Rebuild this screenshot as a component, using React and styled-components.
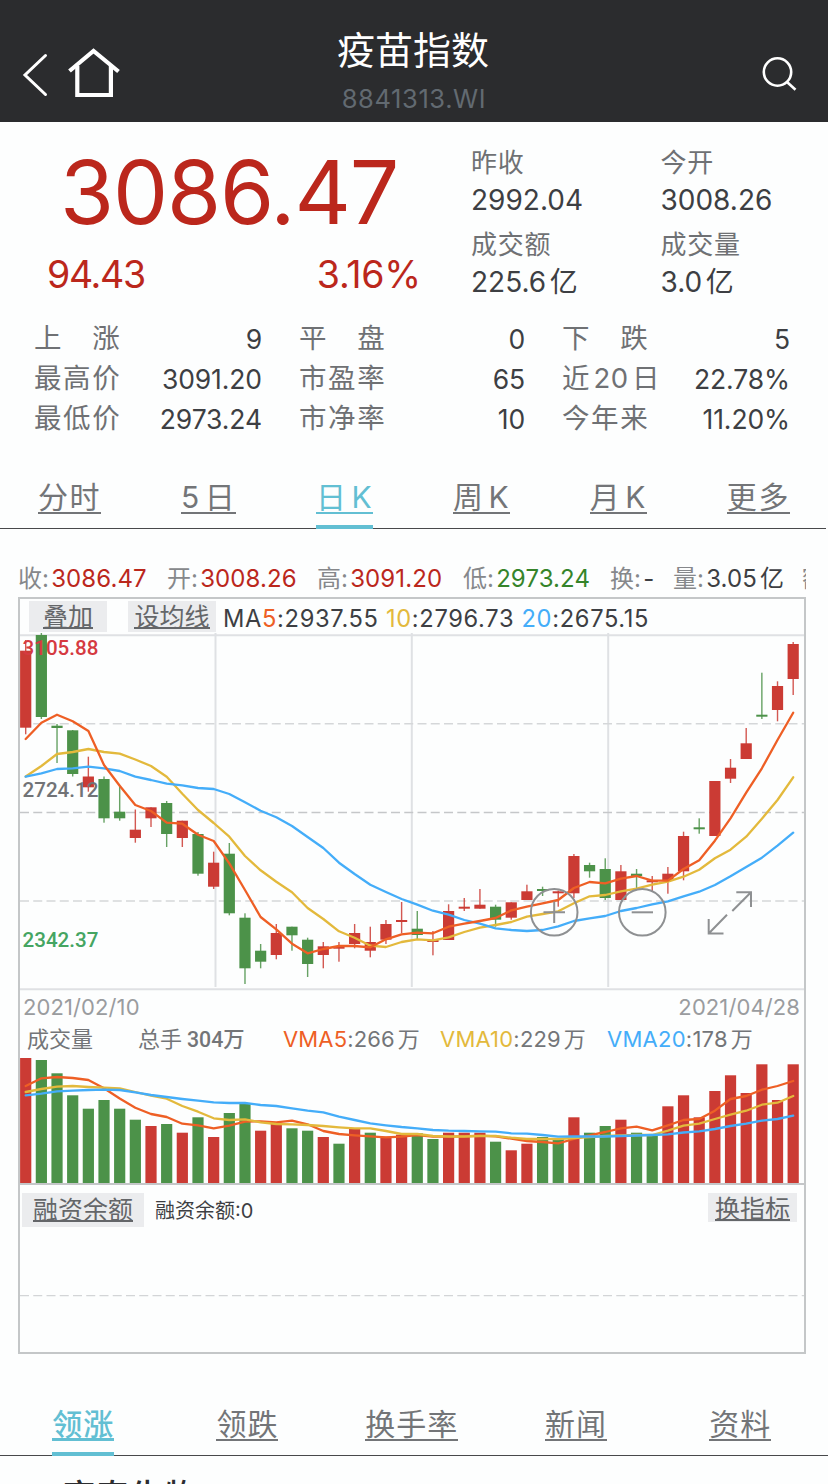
import React from 'react';
import styled, { createGlobalStyle } from 'styled-components';

const RED = '#bb271c';
const UP = '#cb3b34';
const DOWN = '#4c9249';
const ORANGE = '#ee5f25';
const YELLOW = '#e3b93c';
const BLUE = '#44adf9';
const TEAL = '#62bfd3';

const GlobalStyle = createGlobalStyle`
  * {
    box-sizing: border-box;
  }

  body {
    margin: 0;
    background: #fdfefe;
    color: #3d3f43;
    font-family: Inter, "Noto Sans CJK SC", sans-serif;
  }
`;

const Page = styled.div`
  width: 828px;
  height: 1484px;
  overflow: hidden;
  white-space: nowrap;
`;

const Gap = styled.i`
  display: inline-block;
  width: 0.13em;
`;

const Header = styled.header`
  display: grid;
  grid-template-columns: 199px 1fr 201px;
  height: 122px;
  padding: 26px 0 0;
  background: #2b2c2e;
`;

const HeaderLeft = styled.div`
  display: flex;
  gap: 19px;
  padding: 21px 0 0 22px;
`;

const HeaderRight = styled.div`
  display: flex;
  justify-content: flex-end;
  padding: 29px 30px 0 0;
`;

const Heading = styled.div`
  text-align: center;
`;

const Title = styled.h1`
  margin: 0;
  color: #fff;
  font-size: 38px;
  font-weight: 400;
  line-height: 48px;
`;

const Code = styled.div`
  padding: 10px 0 0 2px;
  color: #626a71;
  font-size: 25.5px;
  line-height: 30px;
  letter-spacing: 0.6px;
`;

const Summary = styled.section`
  display: flex;
  height: 196px;
`;

const PriceBlock = styled.div`
  width: 471px;
  color: ${RED};
`;

const Price = styled.div`
  padding: 22px 0 0 60px;
  font-size: 87.5px;
  line-height: 97px;
  letter-spacing: -1.1px;
`;

const Change = styled.div`
  display: flex;
  justify-content: space-between;
  padding: 10px 50px 0 47px;
  font-size: 37.5px;
  line-height: 47px;
  letter-spacing: -1.3px;

  span + span {
    letter-spacing: -0.2px;
  }
`;

const Figures = styled.div`
  display: grid;
  grid-template-columns: 189.5px 1fr;
  grid-auto-rows: 82px;
  flex: 1;
  padding-top: 22px;
`;

const FigureLabel = styled.div`
  color: #6f7174;
  font-size: 26px;
  line-height: 38px;
  letter-spacing: 0.8px;
`;

const FigureValue = styled.div`
  font-size: 28px;
  line-height: 37px;
`;

const Stats = styled.section`
  display: grid;
  grid-template-columns: 228px 226px 228px;
  grid-auto-rows: 40px;
  column-gap: 37px;
  padding: 0 38px 0 34px;
  height: 150px;
`;

const Stat = styled.div`
  display: flex;
  justify-content: space-between;
  font-size: 26.5px;
  line-height: 42px;
  letter-spacing: -0.1px;
`;

const StatLabel = styled.span`
  color: #6f7174;
  font-size: 27.5px;
  line-height: 40px;
  letter-spacing: ${props => (props.$tight ? 0.4 : 1.6)}px;
`;

const PeriodTabs = styled.nav`
  display: flex;
  justify-content: space-between;
  width: 826px;
  height: 61px;
  padding: 0 36px 0 38px;
  border-bottom: 1px solid #48494b;
`;

const RankTabs = styled.nav`
  display: grid;
  grid-template-columns: repeat(5, 164.3px);
  justify-items: center;
  height: 61px;
  margin-top: 41px;
  padding-left: 1px;
  border-bottom: 1px solid #48494b;
`;

const Tab = styled.a`
  height: 61px;
  border-bottom: 4px solid ${props => (props.$active ? TEAL : 'transparent')};
  color: ${props => (props.$active ? TEAL : '#737578')};
  font-size: 30px;
  font-weight: ${props => (props.$bold ? 500 : 400)};
  letter-spacing: 1px;

  span {
    display: block;
    height: 46px;
    border-bottom: ${props => (props.$bold ? 3 : 2)}px solid;
    line-height: 58px;
  }

  ${PeriodTabs} & {
    letter-spacing: 1.6px;
  }
`;

const Quote = styled.div`
  display: flex;
  width: 788px;
  height: 68px;
  margin-left: 18px;
  padding-top: 32px;
  overflow: hidden;
  color: #3d3f43;
  font-size: 24px;
  line-height: 36px;
`;

const QuoteItem = styled.div`
  width: ${props => props.$width}px;
  flex: none;
  color: ${props => props.$color || 'inherit'};
  letter-spacing: 0.1px;

  span {
    margin-right: 2px;
    color: #86888b;
  }
`;

const Panel = styled.section`
  width: 788px;
  height: 757px;
  margin-left: 18px;
  border: 2px solid #c4c7c8;

  svg {
    display: block;
  }
`;

const Toolbar = styled.div`
  display: flex;
  height: 34px;
  padding: 2px 0 0 9px;
`;

const Chip = styled.button`
  width: ${props => props.$width}px;
  height: ${props => props.$height || 31}px;
  margin-right: ${props => props.$after || 0}px;
  padding: 0;
  border: 0;
  background: #ebecee;
  color: #646669;
  font-family: inherit;
  font-size: 25px;
  line-height: 32px;

  span {
    display: inline-block;
    height: 28px;
    border-bottom: 2px solid;
  }
`;

const Averages = styled.div`
  padding-left: 7px;
  font-size: 23.7px;
  line-height: 36px;
  letter-spacing: 0.65px;
`;

const Tint = styled.span`
  color: ${props => props.$color};
`;

const Dates = styled.div`
  display: flex;
  justify-content: space-between;
  height: 34px;
  padding: 0 4px 0 3px;
  color: #9a9c9f;
  font-size: 22px;
  line-height: 33px;
  letter-spacing: 0.1px;
`;

const VolumeLegend = styled.div`
  display: flex;
  height: 33px;
  padding-left: 7px;
  color: #737578;
  font-size: 22px;
  line-height: 29px;
`;

const LegendItem = styled.div`
  width: ${props => props.$width}px;
  flex: none;
  letter-spacing: ${props => props.$spacing || 0}px;

  b {
    margin-left: 5px;
    font-family: Roboto, "Noto Sans CJK SC", sans-serif;
    font-size: 21.3px;
    font-weight: 500;
  }
`;

const MarginBar = styled.div`
  display: flex;
  height: 41px;
  padding: 8px 7px 0 2px;
`;

const MarginText = styled.div`
  flex: 1;
  padding-left: 11px;
  font-size: 20px;
  line-height: 36px;
`;

const StockName = styled.div`
  padding: 16px 0 0 61px;
  color: #2c2d30;
  font-size: 34px;
  font-weight: 500;
  line-height: 50px;
  letter-spacing: 0.6px;
`;

// y positions per trading day: [up?, body top, body bottom, high, low]
const CANDLES = [
  [1, 650.7, 727.7, 640, 734.3], [0, 635, 717, 633, 719], [0, 725.7, 728, 724, 763],
  [0, 730.3, 774, 730, 776.5], [1, 776.5, 787.3, 756.7, 791.7], [0, 779, 818.3, 776.5, 822.7],
  [0, 811.7, 818.3, 785, 820.7], [1, 829.7, 838, 809.5, 842.7], [1, 807.3, 818.3, 807.3, 827],
  [0, 803, 834, 801, 847], [1, 820.7, 838, 820.7, 847], [0, 834, 873.7, 832, 875.7],
  [1, 862.7, 886.7, 851.7, 889], [0, 853.7, 913.3, 843, 915.3], [0, 917.7, 968.3, 913.3, 984],
  [0, 950.7, 961.7, 944, 968.3], [1, 933, 955, 924, 959.3], [0, 926.7, 935.3, 926.7, 950.7],
  [0, 939.7, 964, 937.7, 977], [1, 946.3, 955, 942, 968.3], [1, 946.3, 948.7, 942, 961.7],
  [1, 933, 944, 924, 948.3], [1, 942, 950.7, 926.7, 957.3], [1, 924, 939.7, 920, 944],
  [1, 920, 922, 902, 933.3], [0, 928.7, 935, 911, 939.3], [1, 940, 942, 931, 955.3],
  [1, 911, 940, 904.3, 940], [1, 906.7, 908.7, 898, 911], [1, 904.7, 908.7, 889, 908.7],
  [0, 906.7, 919.7, 904.7, 926.7], [1, 902.3, 917.7, 902.3, 919.7], [1, 891.3, 900, 884.7, 900],
  [0, 889, 891, 886.7, 896], [1, 891.3, 893.3, 890.5, 906.7], [1, 856, 893.3, 854, 898],
  [0, 865, 871.3, 862.7, 877.7], [0, 869, 898, 858.3, 900], [1, 871.3, 900, 865, 900],
  [0, 873.7, 876, 869, 889], [1, 880.3, 882.3, 876, 891], [1, 873.7, 880.3, 867, 893.7],
  [1, 836, 871.3, 831.7, 880.3], [0, 827.3, 829.3, 818.3, 833.7], [1, 781, 836, 781, 836],
  [1, 767.7, 778.7, 759, 783], [1, 743.3, 759, 728, 759], [0, 714.7, 716.7, 672.7, 719],
  [1, 686, 710, 681.3, 721.3], [1, 644, 679, 642, 695],
];

const MA5 = [739, 722.7, 714.7, 721.3, 731, 765, 785.7, 805, 811, 822.7, 823.7, 834.7, 841, 863.3, 890, 917, 929.3, 943.7, 953.3, 949, 946, 946, 947.3, 939.3, 934.3, 932.7, 933.3, 926.7, 923.7, 921, 918, 910.3, 906.7, 903.3, 900, 888, 882, 883.3, 878.7, 876, 880.7, 880.7, 869, 860.3, 840.7, 818.3, 792.7, 768.3, 740, 712.7];
const MA10 = [776.5, 766, 754, 752, 749, 752, 753.7, 759.5, 766, 776.7, 793.7, 810, 823, 836.7, 856, 870.3, 881.7, 892.3, 908, 919, 931.3, 937.7, 945.7, 947, 942, 939.3, 940.3, 937.3, 932, 927.7, 925, 922, 916.7, 914, 911.3, 903.3, 896.3, 895, 891.3, 888.7, 884.7, 881.7, 876.7, 869.7, 858.3, 849.7, 836.7, 818.7, 800, 777.3];
const MA20 = [776.7, 773.3, 769, 768.3, 766.7, 768.3, 771, 776.7, 780, 783.7, 785.3, 788, 789, 794, 802.3, 810.7, 817.3, 826, 837, 848, 862.7, 874, 884.7, 892, 899, 904.7, 910.7, 914.7, 920, 923.7, 928.3, 930, 931, 930, 926.3, 921, 918.3, 916, 911, 908, 904.3, 901.3, 896.3, 891.7, 885, 876.3, 867, 857.7, 845.7, 832.7];

const VOLUMES = [1058, 1060, 1073.3, 1095.3, 1108.7, 1100, 1108.7, 1119.7, 1126, 1124, 1132.7, 1117.3, 1137, 1113, 1104, 1130.7, 1124, 1128.3, 1130.7, 1137, 1143.7, 1128.3, 1132.7, 1136.7, 1134.7, 1133.3, 1139, 1132.7, 1132.7, 1132.7, 1141.7, 1150.3, 1143.7, 1137, 1139, 1117.3, 1132.7, 1126, 1119.7, 1132.7, 1135, 1106.3, 1095.3, 1117.3, 1091, 1075.3, 1093, 1064.3, 1100, 1064.3];
const VOLUME_UP = '10000000101010011001010110011101100100100111111111';
const VMA5 = [1086, 1078.3, 1077, 1078, 1080, 1088.3, 1098.5, 1107.7, 1114, 1117, 1123.7, 1125.3, 1128.3, 1125.7, 1121.7, 1121.3, 1122.3, 1120.7, 1124.3, 1131, 1134, 1135.3, 1136.3, 1137.3, 1136.7, 1135, 1136.7, 1136.7, 1136.3, 1135.7, 1136.3, 1138.7, 1141, 1142, 1143.3, 1139, 1135.3, 1132, 1128.3, 1126.7, 1130.3, 1125.3, 1120, 1119, 1110.7, 1099, 1096, 1089.7, 1086, 1081];
const VMA10 = [1092, 1089, 1086.7, 1086, 1087, 1087.7, 1088.3, 1092, 1095.7, 1098.7, 1106, 1111.7, 1118.3, 1120, 1119.3, 1122.3, 1124, 1124.3, 1125, 1126, 1127.3, 1128.3, 1128.3, 1131, 1134, 1134, 1136, 1136.5, 1136.5, 1136, 1136, 1137.7, 1139, 1139, 1139, 1138, 1137, 1136, 1135.3, 1135, 1135, 1130.7, 1125.7, 1123.7, 1119, 1114.7, 1110.7, 1104.7, 1102.7, 1096];
const VMA20 = [1095.3, 1093.7, 1091.3, 1090.7, 1090, 1089.7, 1090, 1092.3, 1095, 1097, 1099, 1100.7, 1102.3, 1103, 1103, 1105, 1106, 1108.3, 1110.7, 1112.3, 1116.7, 1120, 1123.3, 1125.3, 1127, 1128.3, 1130, 1130.7, 1131, 1131.3, 1131.7, 1133.3, 1133.7, 1135, 1136.7, 1136.3, 1136.5, 1136.5, 1136, 1135.5, 1135, 1134.3, 1132.5, 1131.3, 1129, 1126, 1123.7, 1120.7, 1119, 1115.7];

const xAt = (index) => 25.7 + index * 15.663;

const Line = ({ values, color }) => (
  <polyline
    points={values.map((y, i) => `${xAt(i).toFixed(1)},${y}`).join(' ')}
    fill="none"
    stroke={color}
    strokeWidth="2.3"
    strokeLinejoin="round"
    strokeLinecap="round"
  />
);

const AxisText = styled.text`
  font-family: Roboto, sans-serif;
  font-size: 20.6px;
  font-weight: 500;
`;

const PriceChart = () => (
  <svg width="784" height="358" viewBox="20 633 784 358">
    <g stroke="#dfe1e4" strokeWidth="2">
      <path d="M20 635.2H804M20 989.3H804M215.5 633V987M411.8 633V987M608.2 633V987" />
    </g>
    <g strokeDasharray="9 4.25" strokeWidth="1.6">
      <path d="M20 723.7H804M20 901H804" stroke="#d5d7d9" />
      <path d="M20 812.5H804" stroke="#c5c7c9" strokeWidth="1.3" />
    </g>
    {
      CANDLES.map(([up, top, bottom, high, low], i) => (
        <g key={i} fill={up ? UP : DOWN}>
          <rect x={xAt(i) - 0.7} y={high} width="1.4" height={low - high} opacity="0.85" />
          <rect x={xAt(i) - 5.6} y={top} width="11.2" height={bottom - top} />
        </g>
      ))
    }
    <Line values={MA10} color={YELLOW} />
    <Line values={MA20} color={BLUE} />
    <Line values={MA5} color={ORANGE} />
    <AxisText x="22.5" y="654.8" fill="#d53a41">3105.88</AxisText>
    <AxisText x="22.5" y="797.2" fill="#717376">2724.12</AxisText>
    <AxisText x="22.5" y="947.3" fill="#45a562">2342.37</AxisText>
    <g fill="none" stroke="#8e9092" strokeWidth="2">
      <circle cx="554.2" cy="912.2" r="23.3" />
      <path d="M543.5 912.3H565M554.2 901.5V923" />
      <circle cx="642.3" cy="912.2" r="23.3" />
      <path d="M631.7 912.3H653" />
      <path d="M736.3 892.3H751V907M751 892.3L732.3 911M708.7 919V933.5H723.5M708.7 933.5L727 914.8" />
    </g>
  </svg>
);

const VolumeChart = () => (
  <svg width="784" height="127" viewBox="20 1058 784 127">
    <path d="M20 1184H804" stroke="#c4c6c8" strokeWidth="2" />
    {
      VOLUMES.map((top, i) => (
        <rect
          key={i}
          x={xAt(i) - 5.6}
          y={top}
          width="11.2"
          height={1183 - top}
          fill={VOLUME_UP[i] === '1' ? UP : DOWN}
        />
      ))
    }
    <Line values={VMA5} color={ORANGE} />
    <Line values={VMA10} color={YELLOW} />
    <Line values={VMA20} color={BLUE} />
  </svg>
);

const MarginChart = () => (
  <svg width="784" height="124" viewBox="20 1226 784 124">
    <path d="M20 1295.7H804" stroke="#d3d5d7" strokeWidth="1.3" strokeDasharray="9 4.25" />
  </svg>
);

// small gap wherever Chinese and Latin characters meet
const mixed = (text) => text
  .split(/(?<=[\u4e00-\u9fa5])(?=[\dA-Z])|(?<=[\dA-Z])(?=[\u4e00-\u9fa5])/)
  .map((part, i) => (
    <React.Fragment key={i}>
      {i > 0 && <Gap />}
      {part}
    </React.Fragment>
  ));

const FIGURES = [
  ['昨收', '2992.04'],
  ['今开', '3008.26'],
  ['成交额', '225.6亿'],
  ['成交量', '3.0亿'],
];

const STATS = [
  ['上　涨', '9'], ['平　盘', '0'], ['下　跌', '5'],
  ['最高价', '3091.20'], ['市盈率', '65'], ['近20日', '22.78%'],
  ['最低价', '2973.24'], ['市净率', '10'], ['今年来', '11.20%'],
];

const QUOTES = [
  { label: '收:', value: '3086.47', color: RED, width: 149 },
  { label: '开:', value: '3008.26', color: RED, width: 150 },
  { label: '高:', value: '3091.20', color: RED, width: 146 },
  { label: '低:', value: '2973.24', color: '#35842a', width: 147 },
  { label: '换:', value: '-', width: 63 },
  { label: '量:', value: '3.05亿', width: 129 },
  { label: '额:', value: '', width: 60 },
];

const App = () => (
  <Page>
    <GlobalStyle />
    <Header>
      <HeaderLeft>
        <svg width="26" height="54" viewBox="22 47 26 54" fill="none" stroke="#fff" strokeWidth="3">
          <path d="M45.5 55.5L25 75L45.5 94.5" strokeLinecap="round" />
        </svg>
        <svg width="54" height="54" viewBox="67 47 54 54" fill="none" stroke="#fff" strokeWidth="4.2">
          <path d="M69.5 71L93.5 51L118.5 71.5" />
          <path d="M77.3 66V95H110.9V66" />
        </svg>
      </HeaderLeft>
      <Heading>
        <Title>疫苗指数</Title>
        <Code>8841313.WI</Code>
      </Heading>
      <HeaderRight>
        <svg width="38" height="38" viewBox="760 55 38 38" fill="none" stroke="#fff" strokeWidth="2.6">
          <circle cx="777.5" cy="72" r="13.7" />
          <path d="M787 82L795.5 89.8" />
        </svg>
      </HeaderRight>
    </Header>

    <Summary>
      <PriceBlock>
        <Price>3086.47</Price>
        <Change>
          <span>94.43</span>
          <span>3.16%</span>
        </Change>
      </PriceBlock>
      <Figures>
        {
          FIGURES.map(([label, value]) => (
            <div key={label}>
              <FigureLabel>{label}</FigureLabel>
              <FigureValue>{mixed(value)}</FigureValue>
            </div>
          ))
        }
      </Figures>
    </Summary>

    <Stats>
      {
        STATS.map(([label, value]) => (
          <Stat key={label}>
            <StatLabel $tight={/\d/.test(label)}>{mixed(label)}</StatLabel>
            <span>{value}</span>
          </Stat>
        ))
      }
    </Stats>

    <PeriodTabs>
      {
        ['分时', '5日', '日K', '周K', '月K', '更多'].map((name) => (
          <Tab key={name} $active={name === '日K'}><span>{mixed(name)}</span></Tab>
        ))
      }
    </PeriodTabs>

    <Quote>
      {
        QUOTES.map(({ label, value, color, width }) => (
          <QuoteItem key={label} $color={color} $width={width}>
            <span>{label}</span>{mixed(value)}
          </QuoteItem>
        ))
      }
    </Quote>

    <Panel>
      <Toolbar>
        <Chip $width={78} $after={21}><span>叠加</span></Chip>
        <Chip $width={88}><span>设均线</span></Chip>
        <Averages>
          MA<Tint $color={ORANGE}>5</Tint>:2937.55 <Tint $color={YELLOW}>10</Tint>:2796.73 <Tint $color={BLUE}>20</Tint>:2675.15
        </Averages>
      </Toolbar>
      <PriceChart />
      <Dates>
        <span>2021/02/10</span>
        <span>2021/04/28</span>
      </Dates>
      <VolumeLegend>
        <LegendItem $width={111}>成交量</LegendItem>
        <LegendItem $width={145}>总手<b>304万</b></LegendItem>
        <LegendItem $width={157} $spacing={0.15}><Tint $color={ORANGE}>VMA5</Tint>:{mixed('266万')}</LegendItem>
        <LegendItem $width={167} $spacing={0.2}><Tint $color={YELLOW}>VMA10</Tint>:{mixed('229万')}</LegendItem>
        <LegendItem $width={160} $spacing={0.25}><Tint $color={BLUE}>VMA20</Tint>:{mixed('178万')}</LegendItem>
      </VolumeLegend>
      <VolumeChart />
      <MarginBar>
        <Chip $width={122} $height={34}><span>融资余额</span></Chip>
        <MarginText>融资余额:0</MarginText>
        <Chip $width={89} $height={29}><span>换指标</span></Chip>
      </MarginBar>
      <MarginChart />
    </Panel>

    <RankTabs>
      {
        ['领涨', '领跌', '换手率', '新闻', '资料'].map((name) => (
          <Tab key={name} $active={name === '领涨'} $bold={name === '领涨'}><span>{name}</span></Tab>
        ))
      }
    </RankTabs>
    <StockName>康泰生物</StockName>
  </Page>
);

export default App;
